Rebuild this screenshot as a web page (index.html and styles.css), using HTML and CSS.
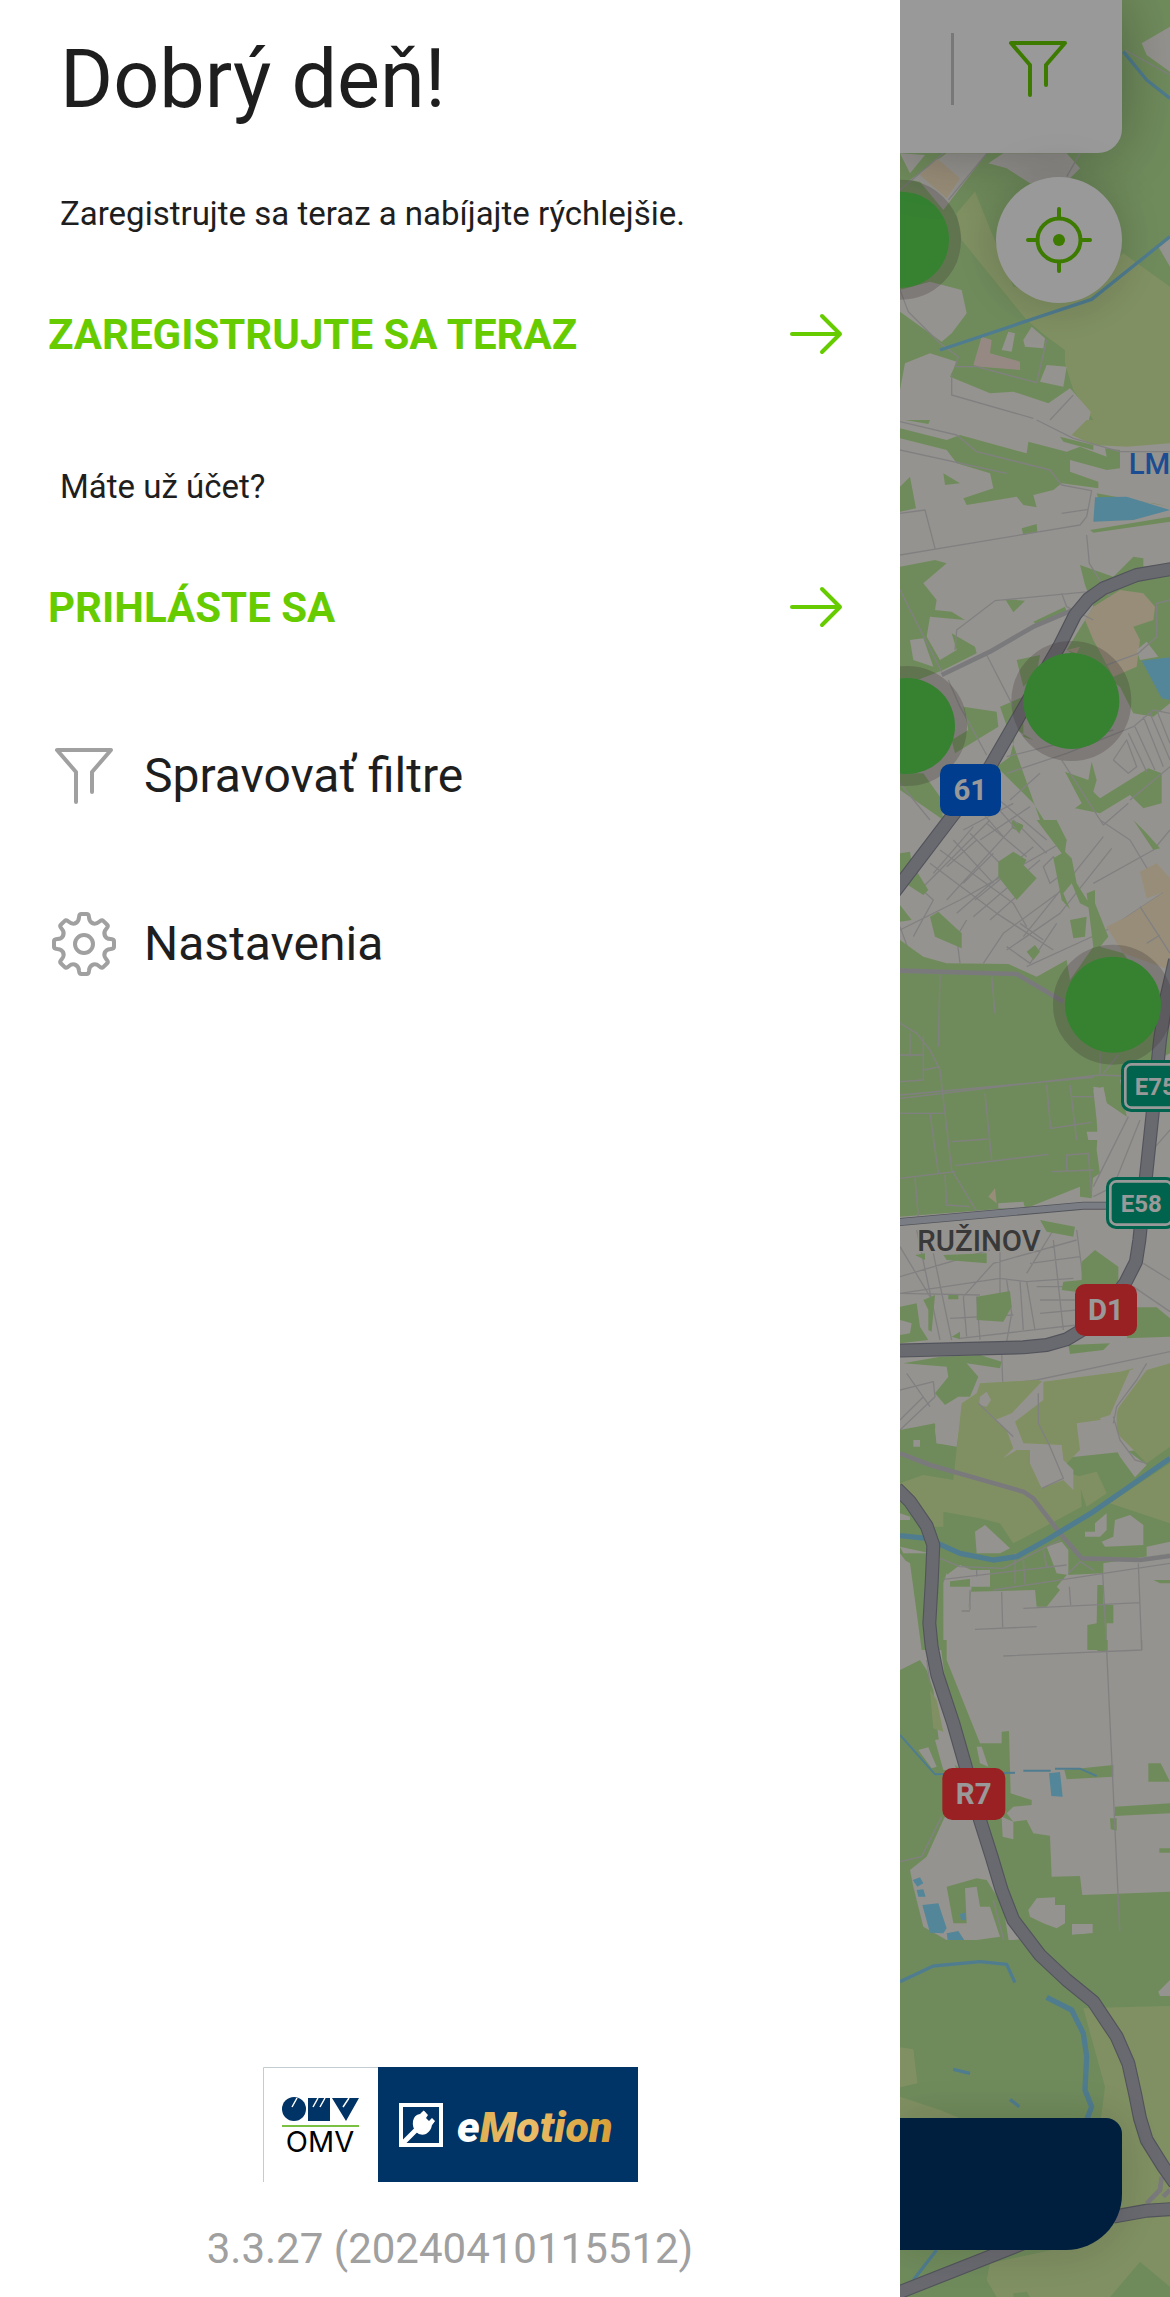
FILE: index.html
```html
<!doctype html>
<html lang="sk">
    <head>
        <meta charset="utf-8">
        <meta name="viewport" content="width=device-width,initial-scale=1">
        <title>OMV eMotion</title>
        <link rel="stylesheet" href="styles.css">
    </head>
    <body>
        <aside class="drawer">
            <h1>Dobrý deň!</h1>
            <section class="account">
                <p>Zaregistrujte sa teraz a nabíjajte rýchlejšie.</p>
                <a class="action" href="#register">
                    ZAREGISTRUJTE SA TERAZ
                    <svg class="arrow" viewBox="0 0 56 48"><path d="M4 24H52M34 6L52 24L34 42"/></svg>
                </a>
            </section>
            <section class="account">
                <p>Máte už účet?</p>
                <a class="action" href="#login">
                    PRIHLÁSTE SA
                    <svg class="arrow" viewBox="0 0 56 48"><path d="M4 24H52M34 6L52 24L34 42"/></svg>
                </a>
            </section>
            <nav class="menu">
                <a href="#filters">
                    <svg class="icon" viewBox="0 0 64 64"><path d="M24 58V28L5 6H59L40 28V48"/></svg>
                    Spravovať filtre
                </a>
                <a href="#settings">
                    <svg class="icon" viewBox="-32 -32 64 64">
                        <defs>
                            <path id="tooth" d="M-8.6 -20.8C-6.3 -21.7 -5.2 -24 -5 -26.5L-4.8 -28Q-4.5 -30 -2.8 -30H2.8Q4.5 -30 4.8 -28L5 -26.5C5.2 -24 6.3 -21.7 8.6 -20.8"/>
                        </defs>
                        <use href="#tooth"/>
                        <use href="#tooth" transform="rotate(45)"/>
                        <use href="#tooth" transform="rotate(90)"/>
                        <use href="#tooth" transform="rotate(135)"/>
                        <use href="#tooth" transform="rotate(180)"/>
                        <use href="#tooth" transform="rotate(225)"/>
                        <use href="#tooth" transform="rotate(270)"/>
                        <use href="#tooth" transform="rotate(315)"/>
                        <circle r="9"/>
                    </svg>
                    Nastavenia
                </a>
            </nav>
            <footer>
                <svg class="logo" viewBox="0 0 375 115">
                    <defs>
                        <linearGradient id="gold">
                            <stop offset="0" stop-color="#d9a441"/>
                            <stop offset=".4" stop-color="#ecc06e"/>
                            <stop offset="1" stop-color="#d79f35"/>
                        </linearGradient>
                    </defs>
                    <path d="M.5 115V.5H115" fill="#fff" stroke="#c3ccd0"/>
                    <rect x="115" width="260" height="115" fill="#003366"/>
                    <g fill="#003366">
                        <circle cx="31" cy="42" r="12"/>
                        <path d="M45 31H67V54H45ZM69 31H96L83 54Z"/>
                    </g>
                    <path d="M29 40L34 31M50 40L55 31M57 40L62 31M80 40L86 31" stroke="#fff" stroke-width="1.5"/>
                    <path d="M19 59H96" stroke="#7ac143" stroke-width="2"/>
                    <text class="omv" x="57" y="85">OMV</text>
                    <rect x="138" y="38" width="40" height="40" fill="none" stroke="#fff" stroke-width="4"/>
                    <path d="M140 76L155 61" stroke="#fff" stroke-width="5"/>
                    <path d="M150 54Q151 48 157 47L161 44L165 48L163 51L166 54L169 51L172 54L169 58Q168 64 163 67Q157 69 153 65Q149 60 150 54Z" fill="#fff"/>
                    <path d="M159 48L162 45M167 57L170 53" stroke="#fff" stroke-width="4"/>
                    <text class="emotion" x="194" y="75" fill="#fff">e<tspan fill="url(#gold)">Motion</tspan></text>
                </svg>
                <p class="version">3.3.27 (20240410115512)</p>
            </footer>
        </aside>

        <main class="map-pane">
            <svg class="map" viewBox="60 0 810 6891" preserveAspectRatio="xMinYMin slice">
                <rect class="land" x="60" width="810" height="6891"/>

                <!-- north -->
                <g>
                    <path class="wood" d="M60 440H870V1260H60Z"/>
                    <path class="wood" d="M700 0H870V700H700Z"/>
                    <path class="meadow" d="M285 575L230 640L245 720L440 960L500 1010L555 1050V1090L580 1170L640 1260H870V860L730 760L560 900L400 860Z"/>
                    <path class="land" d="M870 80L785 130L800 165L870 215ZM200 460H320L190 630L120 545L90 540ZM325 490L370 460H560L600 505L570 535L450 550L380 505ZM835 740L870 715V800Z"/>
                    <path class="land" d="M60 870L150 845L245 870L260 940L215 1000L185 1025L60 935ZM60 460L135 465L90 520ZM430 1020L455 980L495 1015L490 1045L435 1040ZM365 1050L385 995L405 1000L395 1055Z"/>
                    <path class="land" d="M60 1170L75 1090L150 1060L230 1085L210 1130L330 1180L400 1175L505 1210L570 1165L632 1235L625 1270H60ZM480 1145L500 1095L560 1100L550 1160Z"/>
                    <path class="sand" d="M120 525L170 475L240 535L200 595Z"/>
                    <path class="rose" d="M280 1095L305 1010L335 1020L330 1060L420 1085V1110L300 1100Z"/>
                    <path class="street" d="M60 570L190 460M60 870L85 935L180 1030L235 1070L225 1100L290 1100L470 1148L500 1020M215 1120V1185L460 1255M510 1260L580 1185M205 600L320 460M560 530L600 460M735 150L870 225"/>
                    <path class="river" d="M180 1050L635 898L870 710M730 155L800 240L870 295"/>
                </g>

                <!-- rail fields and the 61 -->
                <g transform="translate(0 1260)">
                    <path class="wood" d="M60 25L200 60L240 45L440 100L445 65L560 95L600 80L680 110L675 85L720 90V145L680 150L570 120V155L655 185V205L545 190L520 210L460 225L470 262L430 255L410 230L260 255L250 235L340 205L330 160L230 130L200 90L60 55ZM60 200L90 170L108 265L60 275ZM190 160L240 190L195 195ZM425 325L470 312L472 335L430 345ZM630 330L870 290V305L640 338ZM650 220L870 260L820 250L655 235ZM75 0H150L145 12ZM540 50L640 75V90L550 65Z"/>
                    <path class="meadow" d="M620 0H870V70L740 80L640 75L575 45Z"/>
                    <path class="wood" d="M60 440L165 420L200 430L130 490L170 540L165 570L215 575L255 600L150 590L140 650L180 720L230 690L215 640L285 680L290 700L190 750L60 800ZM375 537L435 542L400 577ZM460 605L555 560L560 575L470 615ZM600 435L700 470L760 410L790 415V440L870 430V850L820 890L760 880L720 800L560 690L640 560L615 495ZM410 720L480 705L470 760L430 800ZM250 860L350 875L355 920L290 960L225 1000L215 960L265 930ZM360 860L430 830V950L460 960L410 930L390 1010L350 1040L460 1150L530 1260H560L480 1200ZM60 1060L130 1060L180 1130L190 1200L60 1110ZM555 1055L625 1080L635 1025L650 1080L640 1115L660 1135L805 1045L845 1060V1150L790 1165L750 1125L660 1180L585 1165L605 1150ZM395 1200L430 1215L420 1235L395 1225Z"/>
                    <path class="sand" d="M640 560L720 510L790 520L825 560L820 600L760 620L780 660L770 740L700 770L640 660L615 600ZM560 690L600 680L590 700Z"/>
                    <path class="land" d="M90 660L130 655L160 740L100 720ZM770 690L800 665L835 710L780 720Z"/>
                    <path class="water" d="M645 232L740 230L870 270L760 300L640 305ZM785 722L870 712V840L845 835Z"/>
                    <path class="street" d="M60 5L230 45L290 95L510 150L545 195L635 212L620 290L600 315L60 405M60 90L380 160M60 280L135 270L165 385M470 0L580 55L720 95H870M545 280L625 268M620 345L628 430L690 530M60 510L185 755M225 690L230 630L345 542L660 512M60 1090L150 1200M205 780L240 860L320 1005M320 705L400 860M545 520L560 560L640 600M680 735L775 700L830 650V550L870 540"/>
                    <path class="street" d="M380 1010L700 930M380 1060L560 1000L760 920L820 870L870 880M390 1140L480 1060M790 890L850 1040M810 880L870 1020M765 920L825 1050M745 940L800 1055M830 870L870 970M700 1020L745 1060L770 1040L740 960L700 1020M230 1180L310 1100L500 1260M250 1230L400 1150M300 1260L450 1160M340 1150L420 1240M545 1020L670 1215L745 1150M750 1140L870 1040M290 1160L370 1250"/>
                    <path class="lane" d="M185 765L330 695L460 620L590 565"/>
                </g>

                <!-- park -->
                <g transform="translate(0 2460)">
                    <path class="street" d="M60 330L240 240L560 60M100 350L160 240L60 150M150 130L350 280L520 390M180 90L400 250L440 320M220 60L340 190M270 40L380 150M320 10L440 110M200 240L400 20M230 280L460 80M280 290L480 120M130 200L330 0M160 160L280 20M310 430L370 340L560 200M380 390L540 280L695 85M430 350L670 50M380 380L450 430L530 310M490 140L520 110L550 160L510 190ZM240 430L230 350L260 300M500 100L400 0M660 0L750 60L870 260M870 30L820 90L640 190M440 440L680 330L870 205M420 310L490 360M100 430L60 320M250 190L340 100M200 140L290 60M285 240L370 170M330 300L420 220"/>
                    <path class="wood" d="M60 360L130 410L200 430L385 432L470 470L560 420L570 480L640 380L620 220L645 210V250L685 350L660 380L730 400L870 600V700L720 780L740 890L680 850L670 800L640 810L650 900L660 1060L600 1100L450 1160L60 1190ZM355 125L400 95L440 120L430 135L470 175L410 240L355 170ZM150 290L175 275L245 340V385L165 350ZM60 100L90 95L95 130L145 210L130 225L60 180ZM60 255L95 300L60 305ZM520 115L545 100L470 0H530L560 60L555 95L575 115L590 190L640 270L600 250L575 190L550 220L570 268L545 240ZM570 300L620 290L615 350L580 355ZM440 395L465 375L480 395L460 420ZM760 0L800 40L840 85L820 90ZM600 1100L640 1060L635 1135L600 1130ZM395 5L430 20L415 38Z"/>
                    <path class="sand" d="M680 320L740 290L870 205V450L730 400ZM780 155L830 130L870 175V210L800 235ZM325 1130L345 1105L350 1150Z"/>
                    <path class="land" d="M640 800L670 805L680 850L740 890L780 890L700 1080L660 1060L650 990L655 900ZM620 935H655V960H625ZM355 1150L430 1145L435 1165H355ZM515 1140L600 1105V1130Z"/>
                    <path class="street" d="M60 835L660 765L730 768M60 825L640 772M180 465L175 680M60 610L110 640L150 690L180 750L195 880L215 1050L300 1190M335 470L345 580M60 880H190M150 880L175 1060M215 965L325 957M60 1075L225 1055M225 1037L505 1003M315 820L335 1020M500 795L512 925L635 907M570 795L590 960M575 830H640M560 1050V1005L625 1000L635 1130M515 1055L640 1050M105 1075L115 1190M195 1065L200 1155L270 1160M60 705H130M60 785L130 780V650M90 640V710M130 750L180 740M660 700V765M715 705L670 760M780 900L700 1100L640 1130M745 890L640 1100M870 930L800 1010M780 260L870 400M800 370L840 345"/>
                    <path class="lane" d="M60 452L410 462L550 545"/>
                    <path class="road-edge thin" d="M50 1207L610 1157H700"/>
                    <path class="road thin" d="M50 1207L610 1157H700"/>
                </g>

                <!-- Ruzinov and Danube side arm -->
                <g transform="translate(0 3690)">
                    <path class="street" d="M60 50L150 200M60 140L330 60M110 0L180 330M160 70L215 330M60 190L360 145L440 155L580 145M250 200L340 100L590 30M360 60V200M380 150L395 250L380 335M420 155L430 300M440 155L465 300M440 130L520 0M520 30L550 300M470 170H590M480 210H590M480 250L590 240M250 200L260 320M290 200L300 330M210 265L400 255M240 325L590 285M450 100L600 80M590 0L610 150M60 190L300 195M870 150L790 100M760 170L870 245M365 370L368 455M60 480L160 455L165 500L60 600M80 430L150 530M295 500L310 470L470 450L870 365M60 570L130 500"/>
                    <path class="wood" d="M480 -30L585 -10L580 20L500 5ZM605 95L645 60L715 110V160L585 185L545 180L550 155L605 150ZM290 200L390 183L395 230L370 275L290 270ZM60 230L110 220L120 290L145 330L60 340V315L90 310L95 280L60 270ZM130 210L165 195L155 305L145 300V240ZM205 195H235V208H205ZM215 320L240 305V328ZM105 75L135 70V90ZM190 75L320 70V100L200 90ZM770 232H830L870 265V320L740 325ZM565 345L690 340L670 360L570 372ZM70 400L180 380L300 375L365 395L360 415L260 400L295 440L270 500L235 500L195 525L165 490L205 440L200 410Z"/>
                    <path class="wood" d="M60 600L165 580L170 640L230 650L250 520L400 700L870 650V970L795 980L670 1000V1030L560 1035L530 1070L540 1080L500 1130L470 1130L465 1080L270 1085L265 1140L275 1070L210 1070V1050L200 1030L190 1060V1260H100L75 990L60 970Z"/>
                    <path class="meadow" d="M300 460L470 450L490 455L720 425L760 415L700 560L660 570L590 580L600 660L540 720L600 740L605 830L400 940L360 880L300 865L190 845V890L160 890L60 760L130 735L220 750L245 520L290 490ZM870 400L800 420L710 540V610L800 700L870 650ZM870 700L690 820L870 880ZM590 740L650 725L680 790L620 830Z"/>
                    <path class="land" d="M300 500L320 485L333 510L320 530L297 525ZM345 570L395 550L490 450V510L405 575L430 640L545 645L550 690L580 720V780L550 750L485 775L450 700V660L410 660L370 685L400 655L380 600ZM750 420L805 410L720 520L700 580L740 660L800 705L765 742L720 680L660 565L690 555ZM180 530L240 510L225 645L170 640L165 600ZM285 905L315 885L390 955L360 970H290ZM60 850L90 860V870H60ZM60 950L150 970H70ZM665 935L700 920L705 870L750 855L790 885V945L675 950ZM500 950L545 935L565 960V1035L530 1030ZM100 630H120V650H100ZM645 880L680 850V900L660 920H615V905H645ZM870 935L800 950V980L870 970ZM270 1020H330V1070H270ZM200 1035L240 1005L320 1040L200 1055ZM65 985L90 1000L125 1260H90ZM495 1150H640V1260H495Z"/>
                    <path class="wood" d="M652 1065H670V1125H700V1180H680V1260H622V1185L650 1180ZM820 1050H870V1060H840Z"/>
                    <path class="street" d="M295 520L400 620M475 490V580L510 650L550 745L485 775M700 560L720 630L765 690L800 700M800 400L770 450L710 530L700 580M180 985L240 1010L370 1015L540 930M190 1048L560 1005M340 1080L870 1000M290 1020V1040M405 970V1060M430 990L435 1060M365 1085L368 1192M285 1198L470 1190M430 1135L780 1118M568 1070L572 1125M775 1000L785 1260M668 1030L680 1260M245 1143H270M270 1080V1140M565 1030L600 995L640 1020M490 960L500 1010"/>
                    <path class="lane" d="M60 670L150 705L430 785L460 805L540 910L605 985L780 990L870 978"/>
                    <path class="river wide" d="M60 917L140 925L240 970L340 990L410 980L500 930L640 845L870 685"/>
                </g>

                <!-- airfield side -->
                <g transform="translate(0 4920)">
                    <path class="wood" d="M60 90L120 60L140 90L160 150L175 290L190 350L260 400L190 540L140 650L90 690L100 740L130 860L200 900L290 900L360 890L330 800L300 800L290 740L255 745L260 850L220 850L200 740L290 715L320 720L370 800L400 990H60ZM180 0H200V60L300 310H365V275L387 273L392 460L455 480V495L400 500L380 520L400 545L440 540L460 580L510 587L515 710L600 708L607 765L870 755V990H480L350 720L280 540L260 380L200 160ZM650 0H683V33H652ZM553 390L700 375V410L560 418ZM805 370H842L870 425H805ZM705 500L870 490V520L705 528ZM690 535H710V572L692 568ZM838 625H870V638H838Z"/>
                    <path class="meadow" d="M150 150L170 180L190 275L160 265Z"/>
                    <path class="land" d="M115 330L145 322L170 380L155 385ZM165 300L195 295L230 390H190ZM365 530L400 545V598L368 590ZM445 810L470 775L525 772V795L555 795V850L530 865L490 850L450 830ZM576 852H638V880L576 884ZM305 320L325 380L300 370L290 320Z"/>
                    <path class="water" d="M507 400L540 396L548 470L514 468ZM127 795L175 790L200 865L190 880L150 878ZM200 880L235 873L262 914H205ZM98 720L120 712L130 730L112 740ZM110 750L130 748L137 770H115ZM240 822L255 818L258 840H243Z"/>
                    <path class="river small" d="M60 285L165 403L405 398M430 392H512M525 386H600L650 408"/>
                    <path class="street" d="M370 48L785 30V0M680 30L720 890M140 60L150 130M185 530L125 650L60 665M340 780L375 915L430 918L870 895"/>
                </g>

                <!-- south -->
                <g transform="translate(0 5880)">
                    <path class="wood" d="M60 -60L400 -60L870 -100V1011H60Z"/>
                    <path class="land" d="M835 95L870 60V108H840Z"/>
                    <path class="meadow" d="M610 145L870 138V1011H350L320 960L330 910L560 860L660 500L675 380ZM60 262L100 268L112 370L60 382ZM60 410L180 450L240 475H60Z"/>
                    <path class="wood" d="M690 1011L780 905L870 980V1011ZM400 1000L440 995L450 1011H400Z"/>
                    <path class="river" d="M60 65L160 18L300 5L380 13L405 68M170 870L100 960M220 328L270 340M390 418L418 440"/>
                    <path class="river wide" d="M500 112L575 150L610 220L620 290L615 390L635 440L620 480"/>
                    <path class="lane" d="M845 650L840 690L800 730M850 710L870 690"/>
                </g>

                <g class="road-edge">
                    <path d="M880 1706L770 1725L670 1765L625 1797L585 1845L540 1935L330 2300L200 2470L40 2680"/>
                    <path d="M885 2880L860 2990L840 3120L820 3320L800 3510L778 3720L768 3785L735 3850L640 3970L560 4018L500 4035L430 4042L50 4052"/>
                    <path d="M700 6650L800 6632L880 6627M50 6880L430 6730"/>
                    <path d="M50 4465L90 4505L140 4578L160 4635L155 4750L148 4870L155 4940L172 5025L220 5170L260 5310L300 5460L335 5570L365 5670L400 5760L480 5865L560 5940L640 6005L710 6110L745 6190L765 6280L780 6355L800 6420L850 6500L885 6550"/>
                </g>
                <g class="road">
                    <path d="M880 1706L770 1725L670 1765L625 1797L585 1845L540 1935L330 2300L200 2470L40 2680"/>
                    <path d="M885 2880L860 2990L840 3120L820 3320L800 3510L778 3720L768 3785L735 3850L640 3970L560 4018L500 4035L430 4042L50 4052"/>
                    <path d="M700 6650L800 6632L880 6627M50 6880L430 6730"/>
                    <path d="M50 4465L90 4505L140 4578L160 4635L155 4750L148 4870L155 4940L172 5025L220 5170L260 5310L300 5460L335 5570L365 5670L400 5760L480 5865L560 5940L640 6005L710 6110L745 6190L765 6280L780 6355L800 6420L850 6500L885 6550"/>
                </g>

                <g class="charger">
                    <circle cx="63" cy="719" r="144"/>
                    <circle cx="81" cy="2178" r="144"/>
                    <circle cx="574" cy="2103" r="144"/>
                    <circle cx="699" cy="3014" r="144"/>
                </g>

                <rect class="blue" x="180" y="2292" width="183" height="156" rx="30"/>
                <rect class="red" x="585" y="3852" width="186" height="156" rx="30"/>
                <rect class="red" x="187" y="5304" width="189" height="156" rx="30"/>
                <g class="teal">
                    <rect x="723" y="3180" width="210" height="156" rx="30"/>
                    <rect class="rim" x="736" y="3193" width="184" height="130" rx="18"/>
                    <rect x="678" y="3531" width="210" height="156" rx="30"/>
                    <rect class="rim" x="691" y="3544" width="184" height="130" rx="18"/>
                </g>
                <g class="road-number">
                    <text x="271" y="2401">61</text>
                    <text x="678" y="3961">D1</text>
                    <text x="281" y="5413">R7</text>
                </g>
                <g class="euro-number">
                    <text x="764" y="3284">E75</text>
                    <text x="722" y="3635">E58</text>
                </g>
                <text class="district" x="112" y="3752">RUŽINOV</text>
                <text class="station" x="746" y="1422">LM</text>
            </svg>

            <div class="search-card">
                <button class="filter" aria-label="Filtre">
                    <svg class="icon" viewBox="0 0 64 64"><path d="M24 58V28L5 6H59L40 28V48"/></svg>
                </button>
            </div>
            <button class="locate" aria-label="Moja poloha">
                <svg class="icon" viewBox="-34 -34 68 68">
                    <circle r="21.5"/>
                    <circle class="dot" r="6"/>
                    <path d="M0 -22V-31M0 22V31M-22 0H-31M22 0H31"/>
                </svg>
            </button>
            <div class="bottom-bar"></div>
            <div class="scrim"></div>
        </main>
    </body>
</html>
```
FILE: styles.css
```css
* {
    box-sizing: border-box;
}
body {
    margin: 0;
    min-height: 100vh;
    display: grid;
    grid-template-columns: 10fr 3fr;
    font-family: Roboto, "Liberation Sans", sans-serif;
    color: #1e1e1e;
    background: #fff;
}
h1,
p {
    margin: 0;
    font-weight: 400;
}
a {
    color: inherit;
    text-decoration: none;
}
button {
    padding: 0;
    border: 0;
    background: none;
    cursor: pointer;
}

/* drawer */
.drawer {
    display: flex;
    flex-direction: column;
    padding: 32px 48px 24px;
    background: #fff;
}
h1 {
    padding-left: 12px;
    margin-bottom: 66px;
    font-size: 81px;
    line-height: 96px;
}
.account {
    margin-bottom: 97px;
}
.account p {
    padding-left: 12px;
    margin-bottom: 64px;
    font-size: 33px;
    line-height: 40px;
}
.action {
    display: flex;
    align-items: center;
    justify-content: space-between;
    height: 72px;
    padding-right: 8px;
    font-size: 42px;
    font-weight: 700;
    color: #66cc00;
}
.arrow {
    width: 56px;
    height: 48px;
}
.arrow path,
.icon {
    fill: none;
    stroke: currentColor;
    stroke-width: 4;
    stroke-linecap: round;
    stroke-linejoin: round;
}
.icon {
    flex: none;
    width: 64px;
    height: 64px;
}
.menu {
    margin-top: -48px;
}
.menu a {
    display: flex;
    align-items: center;
    gap: 28px;
    height: 168px;
    padding-left: 4px;
    font-size: 48px;
    line-height: 56px;
}
.menu .icon {
    color: #a0a0a0;
}
footer {
    display: flex;
    flex-direction: column;
    align-items: center;
    gap: 43px;
    margin-top: auto;
}
.logo {
    width: 375px;
    height: 115px;
}
.omv {
    font: 29px Inter, "Liberation Sans", sans-serif;
    text-anchor: middle;
}
.emotion {
    font: italic 900 43px Roboto, "Liberation Sans", sans-serif;
}
.version {
    font-size: 42px;
    line-height: 48px;
    color: #a0a0a0;
}

/* map */
.map-pane {
    position: relative;
    display: flex;
    flex-direction: column;
    padding: 0 48px 47px 0;
    overflow: hidden;
}
.map,
.scrim {
    position: absolute;
    inset: 0;
    width: 100%;
    height: 100%;
}
.scrim {
    background: rgba(0, 0, 0, .4);
}
.search-card {
    position: relative;
    display: flex;
    align-items: center;
    justify-content: flex-end;
    height: 153px;
    padding: 0 52px 16px 0;
    border-radius: 0 0 24px 0;
    background: #fff;
    box-shadow: 0 0 64px rgba(0, 0, 0, .3);
}
.filter {
    display: flex;
    padding: 4px 0 4px 52px;
    border-left: 3px solid #c8c8c8;
    color: #66cc00;
}
.locate {
    position: relative;
    display: flex;
    align-items: center;
    justify-content: center;
    align-self: flex-end;
    width: 126px;
    height: 126px;
    margin-top: 24px;
    border-radius: 50%;
    background: #fff;
    color: #66cc00;
    box-shadow: 0 0 48px rgba(0, 0, 0, .2);
}
.locate .icon {
    width: 68px;
    height: 68px;
}
.dot {
    fill: currentColor;
    stroke: none;
}
.bottom-bar {
    position: relative;
    height: 132px;
    margin-top: auto;
    border-radius: 0 16px 56px 0;
    background: #003366;
    box-shadow: 0 0 48px rgba(0, 0, 0, .15);
}
.land {
    fill: #f8f5ee;
}
.wood {
    fill: #bae899;
}
.meadow {
    fill: #d6f1a4;
}
.sand {
    fill: #fdebc8;
}
.rose {
    fill: #fbe5da;
}
.water {
    fill: #8cdfff;
}
.street,
.lane,
.river,
.road,
.road-edge {
    fill: none;
    stroke-linejoin: round;
}
.street {
    stroke: #d8d6d8;
    stroke-width: 4;
}
.lane {
    stroke: #cccbd0;
    stroke-width: 14;
}
.river {
    stroke: #85cfee;
    stroke-width: 10;
}
.river.wide {
    stroke-width: 16;
}
.river.small {
    stroke-width: 6;
}
.road-edge {
    stroke: #898c99;
    stroke-width: 42;
}
.road {
    stroke: #b0b1bb;
    stroke-width: 35;
}
.road-edge.thin {
    stroke-width: 24;
}
.road.thin {
    stroke: #cdd0dc;
    stroke-width: 19;
}
/* halo sits under the fill, only its outer half shows */
.charger circle {
    fill: #5ad953;
    stroke: #5a5050;
    stroke-opacity: .25;
    stroke-width: 72;
    paint-order: stroke;
}
.blue {
    fill: #0066ee;
}
.red {
    fill: #ff373c;
}
.teal {
    fill: #00a580;
}
.rim {
    fill: none;
    stroke: #fff;
    stroke-width: 8;
}
.road-number,
.euro-number {
    fill: #fff;
    font-size: 88px;
    font-weight: 700;
}
.road-number {
    text-anchor: middle;
}
.euro-number {
    font-size: 72px;
}
.district {
    fill: #5f5f5f;
    font-size: 88px;
    font-weight: 500;
    paint-order: stroke;
    stroke: #f8f5ee;
    stroke-width: 8;
}
.station {
    fill: #2f80f5;
    font-size: 88px;
    font-weight: 500;
}
```
